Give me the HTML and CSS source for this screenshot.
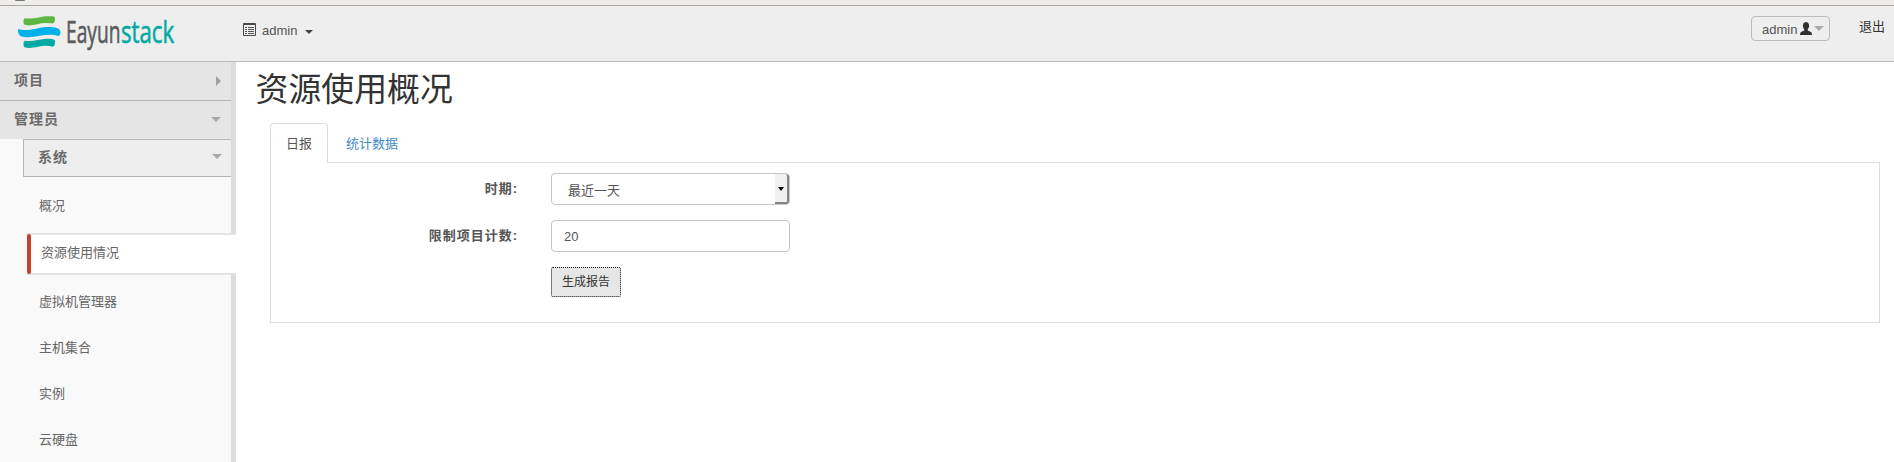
FILE: index.html
```html
<!DOCTYPE html>
<html lang="zh-CN">
<head>
<meta charset="utf-8">
<title>资源使用概况</title>
<link rel="stylesheet" href="styles.css">
</head>
<body>
<div class="chrome"><i class="chrome-dot"></i></div>
<header class="topbar">
  <svg class="logo" width="160" height="42" viewBox="16 12 160 42">
    <path fill="#5cb840" d="M25 18.200C34 19.500 40 16.500 46 16.300S55 16 55 18 54.800 22.500 53 23.500C48 22.500 42 23 37 24.300S25 26 24 24 23.500 18.500 25 18.200Z"/>
    <path fill="#00b1ea" d="M18.500 29.300C25 31 32 29.500 38 28.200S53 26.500 58 28.500C61 30 61.500 34 58.500 36C53 34 46 34.500 40 35.800S26 38 21 36.300C18 35 17.500 29.500 18.500 29.300Z"/>
    <path fill="#03aaa4" d="M25 40.700C34 41.500 39 39.500 44 39S55 38.800 55 41 55 46 53 46.800C48 45.500 43 45.500 38 46.800S25 48.500 24 46.500 23.500 41 25 40.700Z"/>
    <text class="logo-text" transform="translate(66 43) scale(.62 1)" fill="#5b5b5b" stroke="#5b5b5b">Eayun</text>
    <text class="logo-text" transform="translate(121 43) scale(.715 1)" fill="#04aaa3" stroke="#04aaa3">stack</text>
  </svg>
  <div class="project">
    <svg width="13" height="13" viewBox="0 0 13 13"><path fill="none" stroke="#4a4a4a" d="M.5 .5h12v12h-12zM.5 1.500h12"/><path stroke="#555" d="M2 4.500h2M5 4.500h6M2 6.500h2M5 6.500h6M2 8.500h2M5 8.500h6M2 10.500h2M5 10.500h6"/></svg>
    <span>admin</span>
    <i class="caret"></i>
  </div>
  <div class="user">
    <span>admin</span>
    <svg width="12" height="13" viewBox="0 0 12 13"><path fill="#303030" d="M4 .8Q6-.6 8 .8 9.500 2.500 9 5 8.500 6.500 7.800 7.300V8.500L11 10Q12 10.500 12 13H0Q0 10.500 1 10L4.200 8.500V7.300Q3.500 6.500 3 5 2.500 2.500 4 .8Z"/></svg>
    <i class="down"></i>
  </div>
  <a class="logout">退出</a>
</header>
<div class="layout">
  <nav class="sidebar">
    <div class="group line">项目<i class="right"></i></div>
    <div class="group">管理员<i class="down"></i></div>
    <div class="subgroup">系统<i class="down"></i></div>
    <ul class="menu">
      <li>概况</li>
      <li class="active">资源使用情况</li>
      <li>虚拟机管理器</li>
      <li>主机集合</li>
      <li>实例</li>
      <li>云硬盘</li>
    </ul>
  </nav>
  <main class="content">
    <h1>资源使用概况</h1>
    <div class="tabs"><a class="tab current">日报</a><a class="tab">统计数据</a></div>
    <section class="panel">
      <div class="row"><label>时期:</label><div class="field select"><span>最近一天</span><b class="select-button"><i></i></b></div></div>
      <div class="row"><label>限制项目计数:</label><div class="field">20</div></div>
      <div class="row"><label></label><button class="submit">生成报告</button></div>
    </section>
  </main>
</div>
</body>
</html>
```

FILE: styles.css
```css
* { box-sizing: border-box; }
body {
  margin: 0;
  height: 462px;
  overflow: hidden;
  background: #fff;
  color: #555;
  font: 13px "Liberation Sans", "Noto Sans CJK SC", sans-serif;
}
.chrome { height: 6px; background: #eeedeb; border-bottom: 1px solid #a9a8a7; }
.chrome-dot { display: block; width: 10px; height: 1px; margin-left: 15px; background: #777; border-radius: 0 0 5px 5px; }
.topbar {
  display: flex;
  align-items: flex-start;
  height: 56px;
  background: #eee;
  border-bottom: 1px solid #bcbcbc;
}
.logo { margin: 6px 0 0 16px; overflow: visible; }
.logo-text { font: 31px "Open Sans", "Noto Sans", sans-serif; stroke-width: .6px; }
.project { display: flex; align-items: center; height: 16px; margin: 16px 0 0 67px; }
.project span { margin: 1px 8px 0 6px; }
.project svg { margin-top: -2px; }
.caret { border: 4px solid transparent; border-top-color: #444; border-bottom: 0; margin-top: 3px; }
.user {
  display: flex;
  align-items: center;
  width: 79px;
  height: 25px;
  margin: 10px 0 0 auto;
  padding-left: 10px;
  border: 1px solid #bbb;
  border-radius: 4px;
}
.user span { margin-top: 1px; }
.user svg { margin-left: 3px; }
.user .down { margin-left: 2px; }
.down { border: 5px solid transparent; border-top-color: #a9a9a9; border-bottom: 0; }
.right { border: 5px solid transparent; border-left-color: #a0a0a0; border-right: 0; margin-top: 3px; }
.logout { width: 35px; margin: 11px 0 0 29px; color: #333; line-height: 20px; }

.layout { display: flex; height: 400px; }
.sidebar {
  width: 236px;
  background: linear-gradient(to right, #f9f9f9 231px, #dcdcdc 231px);
}
.group, .subgroup {
  display: flex;
  align-items: center;
  justify-content: space-between;
  height: 38px;
  color: #6a6a6a;
  font-weight: bold;
  font-size: 14px;
  letter-spacing: 1px;
}
.group { width: 231px; padding: 0 10px 4px 14px; background: #e5e5e5; }
.group.line { height: 39px; border-bottom: 1px solid #b5b5b5; }
.group .down, .subgroup .down { margin-top: 2px; }
.subgroup {
  width: 208px;
  margin-left: 23px;
  padding: 0 9px 5px 14px;
  background: #eee;
  border: 1px solid #b5b5b5;
  border-right: 0;
}
.menu { margin: 5px 0 0; padding: 0; list-style: none; }
.menu li { height: 46px; padding-left: 39px; line-height: 47px; color: #666; }
.menu .active {
  position: relative;
  height: 42px;
  margin: 5px 0 3px 27px;
  padding-left: 14px;
  line-height: 36px;
  background: #fff;
  border: solid #e4e4e4;
  border-width: 2px 0;
}
.menu .active::before {
  content: "";
  position: absolute;
  left: 0;
  top: -1px;
  width: 4px;
  height: 40px;
  background: #c9402f;
  border-radius: 2px;
}
.content { flex: 1; padding: 0 14px 0 34px; }
h1 {
  height: 61px;
  margin: 0;
  text-indent: -14.5px;
  font-weight: normal;
  font-size: 32.900px;
  line-height: 56px;
  color: #333;
}
.tabs { display: flex; height: 40px; position: relative; margin-bottom: -1px; }
.tab { height: 40px; padding: 0 17px; line-height: 39px; color: #428bca; border: 1px solid transparent; }
.tab.current {
  width: 58px;
  padding: 0 0 0 15px;
  background: #fff;
  color: #555;
  border-color: #ddd;
  border-bottom: 0;
  border-radius: 4px 4px 0 0;
}
.panel {
  display: flex;
  flex-direction: column;
  gap: 15px;
  height: 161px;
  padding-top: 10px;
  border: 1px solid #ddd;
}
.row { display: flex; height: 32px; }
.row label {
  width: 247px;
  margin-right: 33px;
  line-height: 32px;
  text-align: right;
  font-weight: bold;
  letter-spacing: 1px;
  white-space: nowrap;
}
.field {
  display: flex;
  align-items: center;
  width: 239px;
  height: 32px;
  padding: 1px 0 0 12px;
  border: 1px solid #c6c6c6;
  border-radius: 4px;
}
.select { justify-content: space-between; padding: 0 0 0 16px; }
.select-button {
  display: flex;
  align-items: center;
  justify-content: center;
  width: 14px;
  height: 30px;
  background: #f1f1f0;
  border-right: 2px solid #858585;
  border-bottom: 2px solid #858585;
  border-radius: 0 3px 3px 0;
}
.select-button i { border: 3px solid transparent; border-top: 4px solid #000; border-bottom: 0; margin-top: 1px; }
.submit {
  width: 70px;
  height: 30px;
  padding: 0;
  background: #e6e6e6;
  border: 1px dotted #111;
  border-radius: 2px;
  color: #333;
  font: 12px/28px "Liberation Sans", "Noto Sans CJK SC", sans-serif;
}
```
